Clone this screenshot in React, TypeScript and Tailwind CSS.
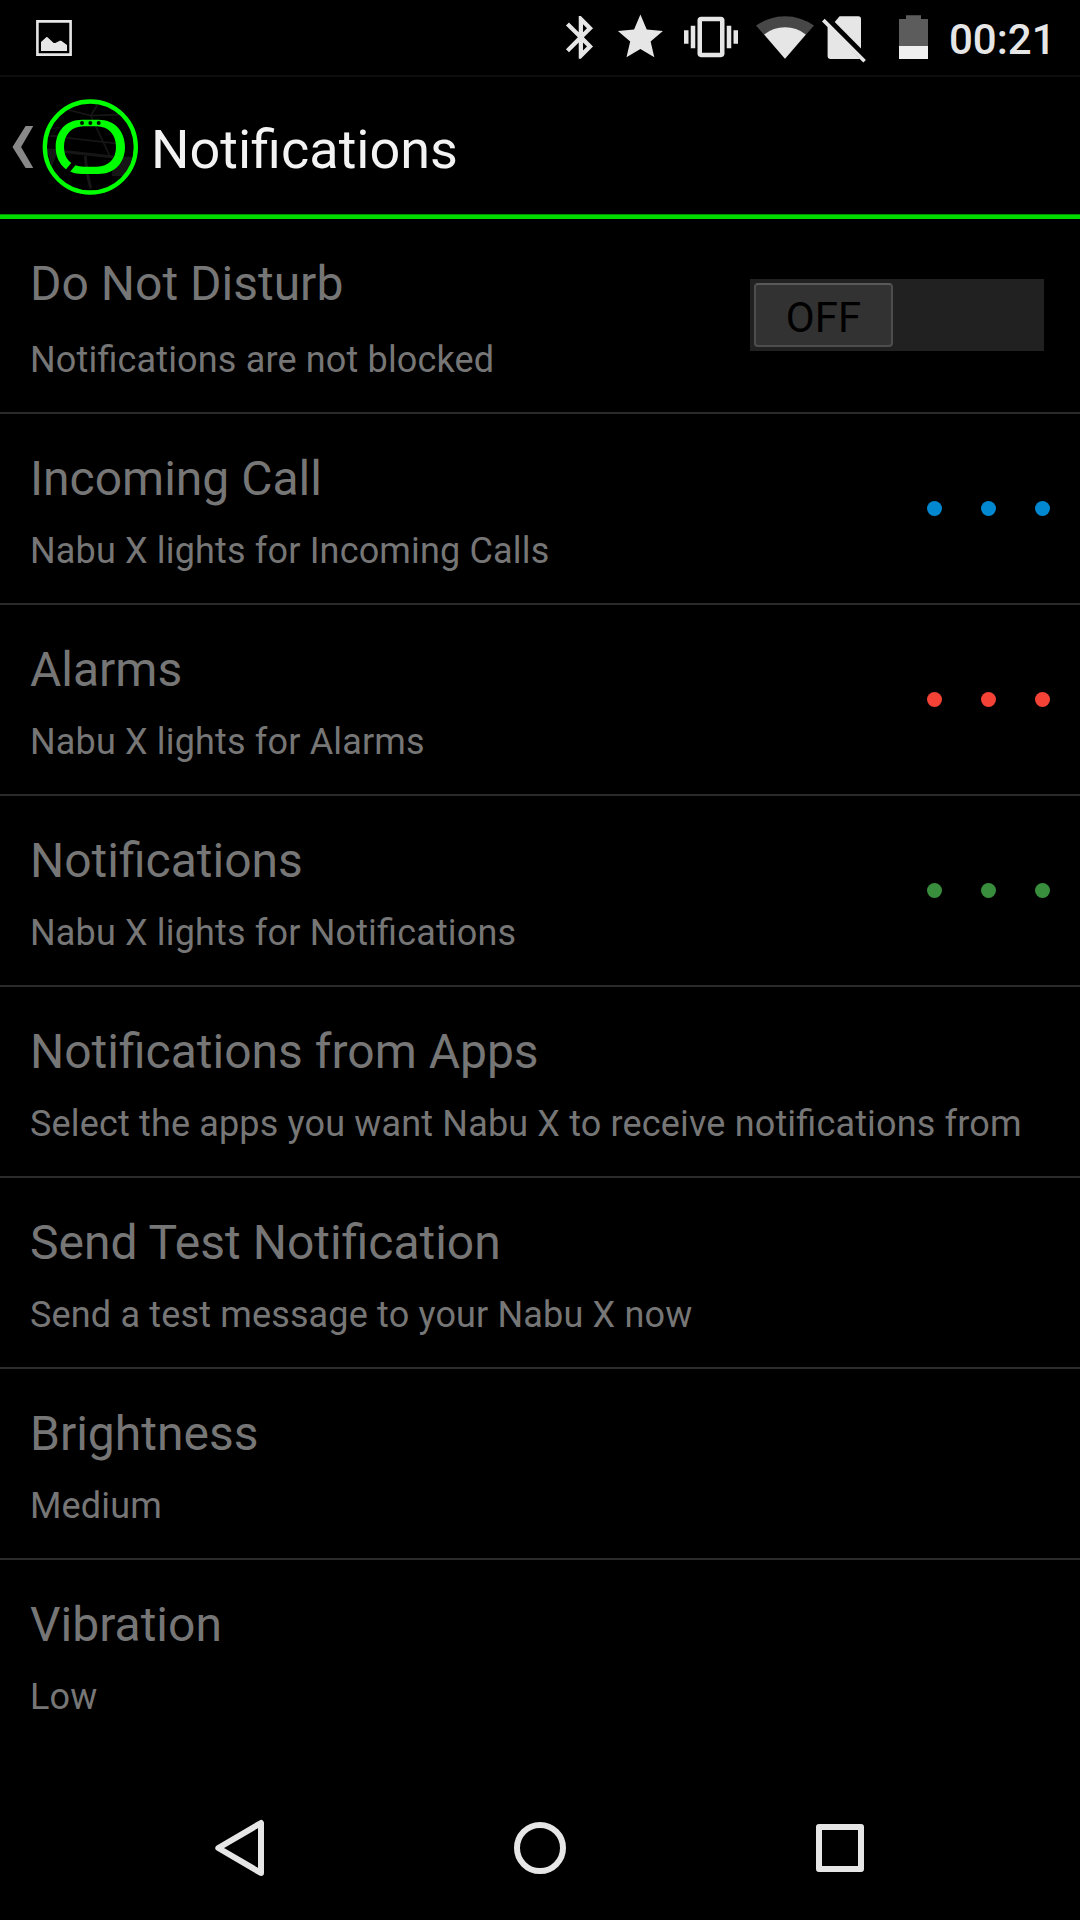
import { clsx } from "clsx"

type Item = {
  title: string
  summary: string
  dots?: string
}

const items: Item[] = [
  { title: "Incoming Call", summary: "Nabu X lights for Incoming Calls", dots: "bg-[#0288d1]" },
  { title: "Alarms", summary: "Nabu X lights for Alarms", dots: "bg-[#f44336]" },
  { title: "Notifications", summary: "Nabu X lights for Notifications", dots: "bg-[#388e3c]" },
  { title: "Notifications from Apps", summary: "Select the apps you want Nabu X to receive notifications from" },
  { title: "Send Test Notification", summary: "Send a test message to your Nabu X now" },
  { title: "Brightness", summary: "Medium" },
  { title: "Vibration", summary: "Low" },
]

function StatusBar() {
  return (
    <div className="flex h-[77px] shrink-0 items-start border-b-2 border-[#0d0d0d] pl-9 text-[#e6e6e6]">
      <svg className="mt-5 h-9 w-9" viewBox="0 0 36 36" fill="currentColor">
        <path d="M1.4 1.4h33.2v33.2H1.4z" fill="none" stroke="currentColor" strokeWidth="2.6" />
        <path d="M5 22l5.5-5 1 .2 6.2 5.8h1.6l4.5-2.3h1.4L31 25v6H5z" />
      </svg>
      <svg className="ml-[468px] h-[75px] w-[400px]" viewBox="540 0 400 75" fill="currentColor">
        <path
          transform="translate(555.3 11.8) scale(2.13)"
          d="M17.71 7.71L12 2h-1v7.59L6.41 5 5 6.41 10.59 12 5 17.59 6.41 19 11 14.41V22h1l5.71-5.71-4.3-4.29 4.3-4.29zM13 5.83l1.88 1.88L13 9.59V5.83zm1.88 10.46L13 18.17v-3.76l1.88 1.88z"
        />
        <path
          transform="translate(613.4 10.1) scale(2.25)"
          d="M12 17.27L18.18 21l-1.64-7.03L22 9.24l-7.19-.61L12 2 9.19 8.63 2 9.24l5.46 4.73L5.82 21z"
        />
        <path
          transform="translate(684 9.9) scale(2.25)"
          d="M0 15h2V9H0v6zm3 2h2V7H3v10zm19-8v6h2V9h-2zm-3 8h2V7h-2v10zM16.5 3h-9C6.67 3 6 3.67 6 4.5v15c0 .83.67 1.5 1.5 1.5h9c.83 0 1.5-.67 1.5-1.5v-15c0-.83-.67-1.5-1.5-1.5zM16 19H8V5h8v14z"
        />
        <path d="M785 58.8L756 25.5A50.3 50.3 0 0 1 814 25.5z" fill="#474747" />
        <path d="M785 58.8L764.2 34.4A34 34 0 0 1 805.8 34.4z" />
        <path d="M839.6 16.2H858.4a2.6 2.6 0 0 1 2.6 2.6V48.4L834.7 22.1z" />
        <path d="M827.6 24V56a3 3 0 0 0 3 3H860z" />
        <path d="M823.3 20.1L864.6 61.2" stroke="currentColor" strokeWidth="3.7" />
        <path d="M906 15.3h15V19h7v27h-29V19h7z" fill="#5c5c5c" />
        <path d="M899 46h29v13h-29z" fill="#efefef" />
      </svg>
      <span className="ml-[9px] mt-[15px] text-[42px] font-medium leading-[49px]">00:21</span>
    </div>
  )
}

function NabuLogo() {
  return (
    <svg className="h-24 w-24" viewBox="126 42 288 288" fill="none">
      <circle cx="270.5" cy="186" r="137" fill="#000" />
      <g stroke="#161616" strokeWidth="5">
        <path d="M206 75l66 17 85-3M292 60l-20 32 57 120" />
        <path d="M149 153l225 25" />
        <path d="M150 195l190 21M256 213l4 45 12 52" strokeWidth="9" />
        <path d="M156 132l22-6-24 26 26-2" strokeWidth="3" />
      </g>
      <path d="M140 190l35 5-20 52zM339 215h58l-18 58h-43z" fill="#161616" />
      <circle cx="271" cy="186" r="136.5" stroke="#00ff00" strokeWidth="13" />
      <path
        fillRule="evenodd"
        fill="#00ff00"
        d="M247 104H295C343 104 375 137 375 186C375 234 343 267 295 267H247C199 267 167 234 167 186C167 137 199 104 247 104zM251 124C214 124 192 149 192 186C192 222 214 245 251 245H290C326 245 348 222 348 186C348 149 326 124 290 124z"
      />
      <path d="M196 267L222 235" stroke="#000" strokeWidth="14" />
      <g fill="#031403">
        <circle cx="246" cy="114" r="6" />
        <circle cx="271" cy="114" r="6" />
        <circle cx="296" cy="114" r="6" />
      </g>
    </svg>
  )
}

function Header() {
  return (
    <header className="flex h-[142px] shrink-0 flex-col">
      <div className="flex h-[137px] items-center pl-3">
        <svg className="mt-[3px] h-[42px] w-[21px]" viewBox="0 0 21 42" fill="#888">
          <path d="M13.6 0H21.300L9.100 21l12.200 21H13.600L.5 21z" />
        </svg>
        <div className="ml-[9px] mt-[3px]">
          <NabuLogo />
        </div>
        <h1 className="ml-[13px] mt-[9px] text-[54px] leading-[64px] text-[#f3f3f3]">Notifications</h1>
      </div>
      <div className="h-[5px] border-t border-[#009400] bg-[#00dc00]" />
    </header>
  )
}

function LightDots({ color }: { color: string }) {
  return (
    <div className="flex gap-[39px]">
      {[0, 1, 2].map((i) => (
        <span key={i} className={clsx("size-[15px] rounded-full", color)} />
      ))}
    </div>
  )
}

function Toggle() {
  return (
    <div className="mt-[-1px] mr-1.5 flex h-[72px] w-[294px] bg-[#212121] p-1">
      <div className="flex h-16 w-[139px] items-center justify-center rounded-[4px] border-2 border-[#4d4d4d] border-t-[#595959] bg-[#323232] pt-1 text-[42px] leading-[49px] text-black">
        OFF
      </div>
    </div>
  )
}

function RowText({ title, summary, gap }: { title: string; summary: string; gap: string }) {
  return (
    <div className="whitespace-nowrap pt-1.5">
      <h2 className="text-[48px] leading-[56px]">{title}</h2>
      {/* tracking turns ligatures off, so ask for them again */}
      <p className={clsx("text-[36px] leading-[42px] tracking-[0.16px] [font-feature-settings:'liga'_1]", gap)}>
        {summary}
      </p>
    </div>
  )
}

export default function App() {
  return (
    <div className="flex h-[1920px] w-[1080px] flex-col overflow-hidden bg-black font-['Roboto',sans-serif]">
      <StatusBar />
      <Header />

      <main className="flex-1 text-[#767676]">
        <div className="flex h-[195px] items-center justify-between border-b-2 border-[#2b2b2b] px-[30px]">
          <RowText title="Do Not Disturb" summary="Notifications are not blocked" gap="mt-[27px]" />
          <Toggle />
        </div>
        {items.map((item) => (
          <div
            key={item.title}
            className="flex h-[191px] items-center justify-between border-b-2 border-[#2b2b2b] px-[30px] last:border-transparent"
          >
            <RowText title={item.title} summary={item.summary} gap="mt-[23px]" />
            {item.dots && <LightDots color={item.dots} />}
          </div>
        ))}
      </main>

      <nav className="flex h-36 shrink-0 items-center justify-center gap-[240px] text-[#e6e6e6]">
        <svg className="h-[60px] w-[60px]" viewBox="0 0 60 60" fill="none" stroke="currentColor" strokeWidth="6" strokeLinejoin="round">
          <path d="M8.300 30L51 5v50z" />
        </svg>
        <svg className="h-[60px] w-[60px]" viewBox="0 0 60 60" fill="none" stroke="currentColor" strokeWidth="6">
          <circle cx="30" cy="30" r="23" />
        </svg>
        <svg className="h-[60px] w-[60px]" viewBox="0 0 60 60" fill="none" stroke="currentColor" strokeWidth="6" strokeLinejoin="round">
          <path d="M9 9h42v42H9z" />
        </svg>
      </nav>
    </div>
  )
}
